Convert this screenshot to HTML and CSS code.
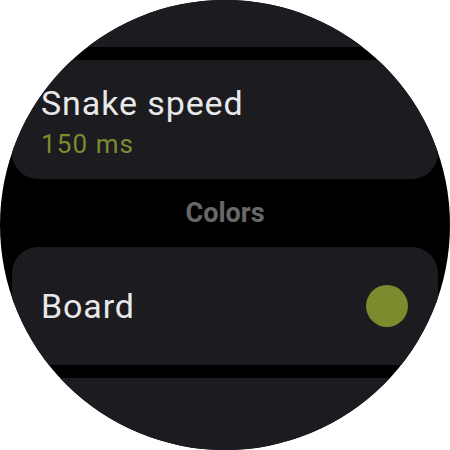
FILE: index.html
```html
<!DOCTYPE html>
<html>
<head>
<meta charset="utf-8">
<link rel="stylesheet" href="styles.css">
</head>
<body>
<div class="screen">
  <div class="list">
    <div class="card card-top"></div>
    <div class="card card-text">
      <div class="title">Snake speed</div>
      <div class="sub">150 ms</div>
    </div>
    <div class="header">Colors</div>
    <div class="card card-row">
      <div class="title">Board</div>
      <div class="swatch"></div>
    </div>
    <div class="card card-next"></div>
  </div>
</div>
</body>
</html>
```
FILE: styles.css
```css
html, body {
  margin: 0;
  padding: 0;
  background: #ffffff;
}
.screen {
  width: 450px;
  height: 450px;
  border-radius: 50%;
  overflow: hidden;
  background: #000000;
  font-family: Roboto, "Liberation Sans", sans-serif;
}
.list {
  padding: 0 12px;
  display: flex;
  flex-direction: column;
}
.card {
  background: #1c1b20;
  border-radius: 26px;
  box-sizing: border-box;
}
.card-top {
  height: 119px;
  margin-top: -72px;
  margin-bottom: 13px;
}
.card-text {
  height: 119px;
  padding: 23px 29px 0 29px;
}
.title {
  font-size: 34px;
  line-height: 40px;
  letter-spacing: 0.9px;
  color: #e8e8ea;
}
.sub {
  font-size: 26px;
  line-height: 30px;
  letter-spacing: 1.1px;
  margin-top: 6px;
  color: #7a8c2e;
}
.header {
  height: 68px;
  line-height: 68px;
  text-align: center;
  font-size: 27px;
  font-weight: bold;
  color: #686868;
}
.card-row {
  height: 118px;
  display: flex;
  align-items: center;
  justify-content: space-between;
  padding: 0 30px 0 29px;
  margin-bottom: 13px;
}
.swatch {
  width: 42px;
  height: 42px;
  border-radius: 50%;
  background: #7a8c2e;
}
.card-next {
  height: 119px;
}
```
